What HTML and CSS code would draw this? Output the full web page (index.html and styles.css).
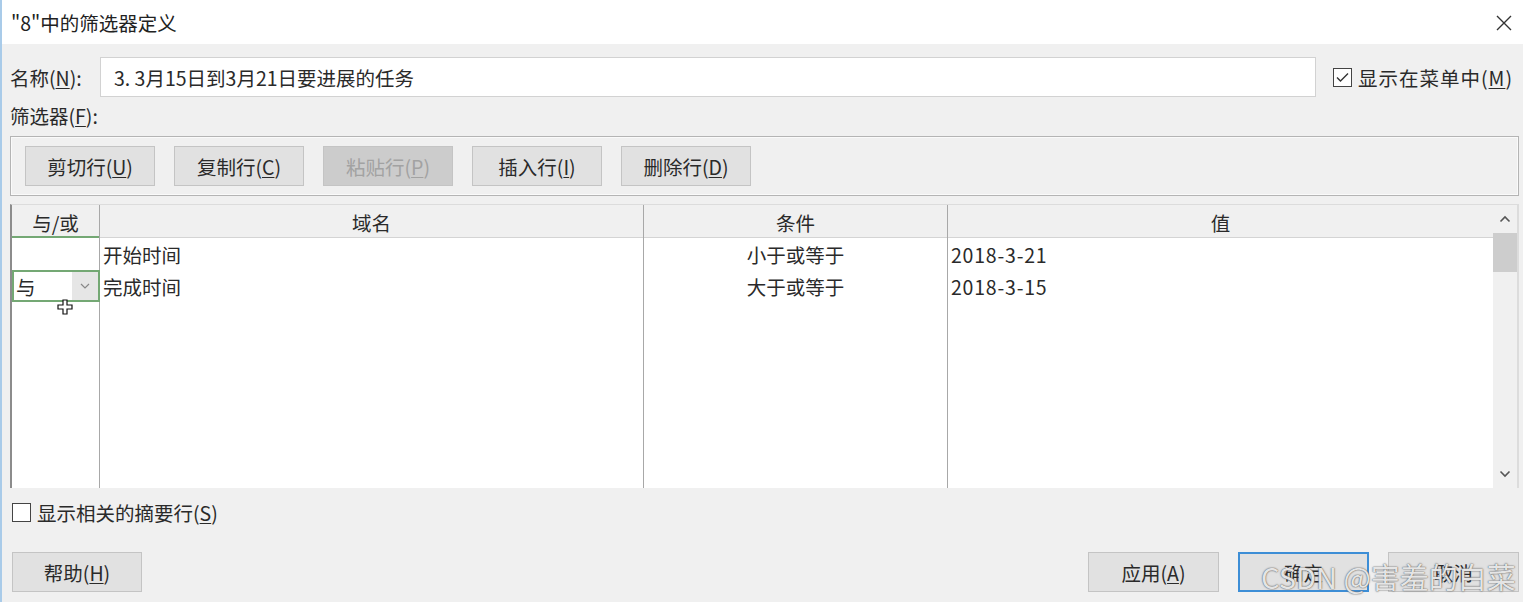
FILE: index.html
```html
<!DOCTYPE html>
<html lang="zh-CN">
<head>
    <meta charset="UTF-8">
    <title>筛选器定义</title>
    <link rel="stylesheet" href="styles.css">
</head>
<body>

    <div class="titlebar">
        <div class="title">"8"中的筛选器定义</div>
        <div class="close">
            <svg width="18" height="18" viewBox="0 0 18 18"><path d="M2 2 L16 16 M16 2 L2 16" stroke="#333" stroke-width="1.4" fill="none"/></svg>
        </div>
    </div>

    <div class="dialog">
        <div class="name-row">
            <label class="name-label">名称(<u>N</u>):</label>
            <div class="name-input">3. 3月15日到3月21日要进展的任务</div>
            <div class="check checked">
                <svg width="13" height="11" viewBox="0 0 13 11"><path d="M1 5.5 L4.5 9 L12 1.5" stroke="#333" stroke-width="1.4" fill="none"/></svg>
            </div>
            <span class="check-text">显示在菜单中(<u>M</u>)</span>
        </div>

        <div class="filter-label">筛选器(<u>F</u>):</div>

        <div class="toolbar">
            <button>剪切行(<u>U</u>)</button>
            <button>复制行(<u>C</u>)</button>
            <button class="disabled">粘贴行(<u>P</u>)</button>
            <button>插入行(<u>I</u>)</button>
            <button>删除行(<u>D</u>)</button>
        </div>

        <div class="grid">
            <div class="col col-op">
                <div class="head head-op">与/或</div>
                <div class="cell"></div>
                <div class="cell cell-select">
                    <span>与</span>
                    <span class="drop">
                        <svg width="10" height="6" viewBox="0 0 10 6"><path d="M1 1 L5 5 L9 1" stroke="#888" stroke-width="1.2" fill="none"/></svg>
                    </span>
                </div>
            </div>
            <div class="col col-field">
                <div class="head">域名</div>
                <div class="cell">开始时间</div>
                <div class="cell">完成时间</div>
            </div>
            <div class="col col-cond">
                <div class="head">条件</div>
                <div class="cell center">小于或等于</div>
                <div class="cell center">大于或等于</div>
            </div>
            <div class="col col-value">
                <div class="head">值</div>
                <div class="cell latin">2018-3-21</div>
                <div class="cell latin">2018-3-15</div>
            </div>
            <div class="scrollbar">
                <div class="arrow">
                    <svg width="12" height="8" viewBox="0 0 12 8"><path d="M1.5 6.5 L6 2 L10.5 6.5" stroke="#555" stroke-width="1.6" fill="none"/></svg>
                </div>
                <div class="thumb"></div>
                <div class="track"></div>
                <div class="arrow">
                    <svg width="12" height="8" viewBox="0 0 12 8"><path d="M1.5 1.5 L6 6 L10.5 1.5" stroke="#555" stroke-width="1.6" fill="none"/></svg>
                </div>
            </div>
        </div>

        <div class="summary-row">
            <div class="check"></div>
            <span class="check-text">显示相关的摘要行(<u>S</u>)</span>
        </div>

        <div class="footer">
            <button>帮助(<u>H</u>)</button>
            <div class="footer-right">
                <button>应用(<u>A</u>)</button>
                <button class="default">确定</button>
                <button>取消</button>
            </div>
        </div>
    </div>

    <!-- mouse cursor over the grid -->
    <svg class="cursor" width="16" height="16" viewBox="0 0 16 16">
        <path d="M6 1 H10 V6 H15 V10 H10 V15 H6 V10 H1 V6 H6 Z" fill="#fff" stroke="#111" stroke-width="1.2"/>
    </svg>

    <div class="watermark">CSDN @害羞的白菜</div>

</body>
</html>
```

FILE: styles.css
```css
* {
    box-sizing: border-box;
}

body {
    margin: 0;
    width: 1523px;
    height: 602px;
    overflow: hidden;
    position: relative;
    background-color: #f0f0f0;
    border-left: 2px solid #a9cbe9;
    font-family: "Noto Sans CJK SC", "Noto Sans", sans-serif;
    font-size: 19.5px;
    color: #2a2a2a;
}

u {
    text-decoration: underline;
    text-decoration-thickness: 1px;
    text-underline-offset: 2px;
}

.titlebar {
    height: 44px;
    background-color: #fff;
    display: flex;
    align-items: center;
    justify-content: space-between;
    padding: 0 10px 0 9px;
}

.title {
    font-size: 19.5px;
    color: #222;
}

.close {
    display: flex;
    padding-top: 2px;
}

.dialog {
    padding: 0 4px 0 8px;
}

.name-row {
    display: flex;
    align-items: center;
    margin-top: 13px;
    height: 40px;
    padding-right: 6px;
}

.name-label {
    width: 90px;
}

.name-input {
    flex: 1;
    height: 40px;
    background-color: #fff;
    border: 1px solid #d2d2d2;
    padding-left: 13px;
    display: flex;
    align-items: center;
}

.check {
    width: 19px;
    height: 19px;
    border: 1px solid #444;
    background-color: #fff;
    display: flex;
    align-items: center;
    justify-content: center;
    flex-shrink: 0;
}

.name-row .check {
    margin-left: 17px;
}

.check-text {
    margin-left: 6px;
    white-space: nowrap;
}

.name-row .check-text {
    letter-spacing: 1px;
}

.filter-label {
    margin-top: 8px;
    height: 22px;
    line-height: 22px;
}

.toolbar {
    margin-top: 9px;
    height: 60px;
    border: 1px solid #b4b4b4;
    box-shadow: inset 0 0 0 1px #fafafa;
    display: flex;
    align-items: center;
    gap: 19px;
    padding-left: 14px;
}

button {
    width: 130px;
    height: 40px;
    background-color: #e1e1e1;
    border: 1px solid #c4c4c4;
    font-family: inherit;
    font-size: 19.5px;
    color: #2a2a2a;
    padding: 0;
}

button.disabled {
    background-color: #cccccc;
    border-color: #c4c4c4;
    color: #a2a2a2;
}

.grid {
    margin-top: 8px;
    height: 284px;
    display: flex;
    background-color: #fff;
    border-top: 1px solid #dcdcdc;
    border-left: 2px solid #8c8c8c;
    border-right: 2px solid #dcdcdc;
}

.col {
    display: flex;
    flex-direction: column;
    border-right: 1px solid #a8a8a8;
}

.col-op { width: 88px; }
.col-field { width: 544px; }
.col-cond { width: 304px; }
.col-value { width: 545px; border-right: none; }

.head {
    height: 33px;
    background-color: #f0f0f0;
    border-bottom: 1px solid #d4d4d4;
    display: flex;
    align-items: center;
    justify-content: center;
    padding-top: 3px;
}

.head-op {
    border-bottom: 2px solid #74a874;
}

.cell {
    height: 32px;
    display: flex;
    align-items: center;
    padding-left: 3px;
}

.cell.center {
    justify-content: center;
    padding-left: 0;
}

.cell.latin {
    letter-spacing: 0.8px;
}

.cell-select {
    border: 2px solid #74a874;
    margin-right: -1px;
    justify-content: space-between;
    padding-left: 2px;
}

.drop {
    width: 26px;
    height: 28px;
    background-color: #e6e6e6;
    display: flex;
    align-items: center;
    justify-content: center;
}

.scrollbar {
    width: 24px;
    margin-left: auto;
    background-color: #f0f0f0;
    display: flex;
    flex-direction: column;
}

.arrow {
    height: 28px;
    display: flex;
    align-items: center;
    justify-content: center;
}

.thumb {
    height: 39px;
    background-color: #cdcdcd;
}

.track {
    flex: 1;
}

.summary-row {
    display: flex;
    align-items: center;
    margin-top: 15px;
    height: 19px;
}

.summary-row .check {
    margin-left: 2px;
}

.footer {
    margin-top: 30px;
    display: flex;
    justify-content: space-between;
    padding-left: 2px;
}

.footer button {
    width: 130px;
}

.footer-right {
    display: flex;
    gap: 19px;
}

.footer-right button {
    width: 131px;
}

button.default {
    border: 2px solid #3d8ed6;
}

.cursor {
    position: absolute;
    left: 55px;
    top: 299px;
}

.watermark {
    position: absolute;
    left: 1259px;
    top: 555px;
    font-family: "Noto Sans CJK SC", "Liberation Sans", sans-serif;
    font-size: 29px;
    color: rgba(255, 255, 255, 0.85);
    text-shadow: 0 0 1px #555, 0 0 2px #777;
    white-space: nowrap;
}
```
